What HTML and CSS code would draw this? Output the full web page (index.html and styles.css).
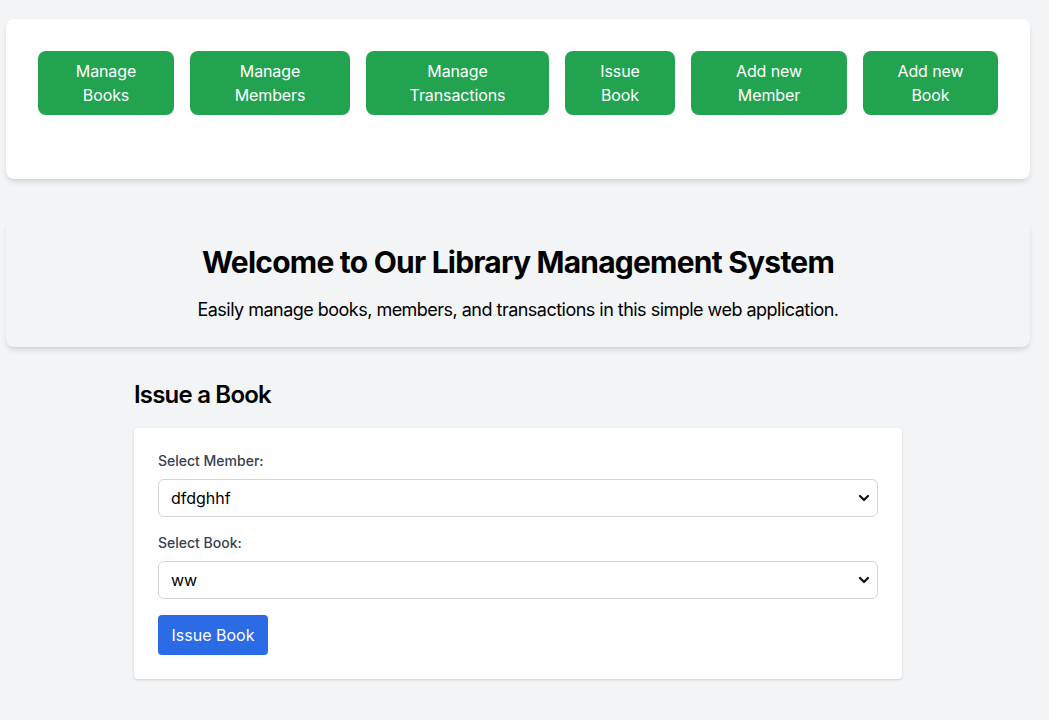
FILE: index.html
```html
<!DOCTYPE html>
<html lang="en">
<head>
<meta charset="utf-8">
<title>Library Management System</title>
<link rel="stylesheet" href="styles.css">
</head>
<body>
<div class="page">
  <nav class="nav-card">
    <div class="nav-buttons">
      <a class="nav-btn w1" href="#">Manage Books</a>
      <a class="nav-btn w2" href="#">Manage Members</a>
      <a class="nav-btn w3" href="#">Manage Transactions</a>
      <a class="nav-btn w4" href="#">Issue Book</a>
      <a class="nav-btn w5" href="#">Add new Member</a>
      <a class="nav-btn w6" href="#">Add new Book</a>
    </div>
  </nav>

  <section class="hero">
    <h1 class="hero-title">Welcome to Our Library Management System</h1>
    <p class="hero-text">Easily manage books, members, and transactions in this simple web application.</p>
  </section>

  <main class="issue">
    <h2 class="issue-title">Issue a Book</h2>
    <form class="form-card">
      <label class="field-label" for="member">Select Member:</label>
      <div class="select-wrap">
        <select id="member" class="field-select">
          <option>dfdghhf</option>
        </select>
        <svg class="chev" width="12" height="8" viewBox="0 0 12 8" aria-hidden="true"><path d="M2 2 L6 6 L10 2" fill="none" stroke="#111" stroke-width="2.2" stroke-linecap="round" stroke-linejoin="round"/></svg>
      </div>
      <label class="field-label" for="book">Select Book:</label>
      <div class="select-wrap">
        <select id="book" class="field-select">
          <option>ww</option>
        </select>
        <svg class="chev" width="12" height="8" viewBox="0 0 12 8" aria-hidden="true"><path d="M2 2 L6 6 L10 2" fill="none" stroke="#111" stroke-width="2.2" stroke-linecap="round" stroke-linejoin="round"/></svg>
      </div>
      <button type="button" class="issue-btn">Issue Book</button>
    </form>
  </main>
</div>
</body>
</html>
```

FILE: styles.css
```css
* { box-sizing: border-box; }

html, body {
  margin: 0;
  padding: 0;
}

body {
  background: #f3f4f6;
  font-family: Inter, "Noto Sans", "Liberation Sans", sans-serif;
  color: #000;
}

.page {
  width: 1024px;
  margin-left: 6px;
  padding-top: 19px;
  padding-bottom: 40px;
}

.nav-card {
  background: #fff;
  border-radius: 8px;
  box-shadow: 0 4px 6px -1px rgba(0,0,0,0.1), 0 2px 4px -2px rgba(0,0,0,0.1);
  padding: 32px 32px 64px;
}

.nav-buttons {
  display: flex;
  gap: 16px;
}

.nav-btn {
  flex: none;
  display: block;
  background: #22a34f;
  color: #fff;
  text-decoration: none;
  text-align: center;
  font-size: 16px;
  line-height: 24px;
  letter-spacing: -0.1px;
  padding: 8px 16px;
  border-radius: 8px;
}

.w1 { width: 136px; }
.w2 { width: 160px; }
.w3 { width: 183px; }
.w4 { width: 110px; }
.w5 { width: 156px; }
.w6 { width: 135px; }

.hero {
  margin-top: 41px;
  background: #f3f4f6;
  border-radius: 8px;
  box-shadow: 0 4px 6px -1px rgba(0,0,0,0.1), 0 2px 4px -2px rgba(0,0,0,0.1);
  padding: 24px 24px 23px;
  text-align: center;
}

.hero-title {
  margin: 0 0 16px;
  font-size: 30px;
  line-height: 36px;
  font-weight: 700;
  letter-spacing: -0.78px;
}

.hero-text {
  margin: 0;
  font-size: 18px;
  line-height: 28px;
  letter-spacing: -0.52px;
}

.issue {
  width: 768px;
  margin: 32px auto 0;
}

.issue-title {
  margin: 0 0 17px;
  font-size: 24px;
  line-height: 32px;
  font-weight: 600;
  letter-spacing: -0.8px;
}

.form-card {
  background: #fff;
  border-radius: 4px;
  box-shadow: 0 1px 3px 0 rgba(0,0,0,0.12), 0 1px 2px -1px rgba(0,0,0,0.1);
  padding: 23px 24px 24px;
  display: flex;
  flex-direction: column;
  align-items: flex-start;
}

.field-label {
  font-size: 14px;
  line-height: 20px;
  font-weight: 500;
  color: #374151;
  margin-bottom: 8px;
}

.select-wrap {
  position: relative;
  width: 100%;
  margin-bottom: 16px;
}

.field-select {
  appearance: none;
  -webkit-appearance: none;
  display: block;
  width: 100%;
  height: 38px;
  padding: 0 36px 0 12px;
  border: 1px solid #d1d5db;
  border-radius: 6px;
  background: #fff;
  font-family: inherit;
  font-size: 16px;
  color: #000;
}

.chev {
  position: absolute;
  right: 8px;
  top: 15px;
  pointer-events: none;
}

.issue-btn {
  background: #2b6be6;
  color: #fff;
  border: none;
  border-radius: 4px;
  font-family: inherit;
  font-size: 16px;
  line-height: 24px;
  padding: 8px 0;
  width: 110px;
  white-space: nowrap;
  text-align: center;
}
```
